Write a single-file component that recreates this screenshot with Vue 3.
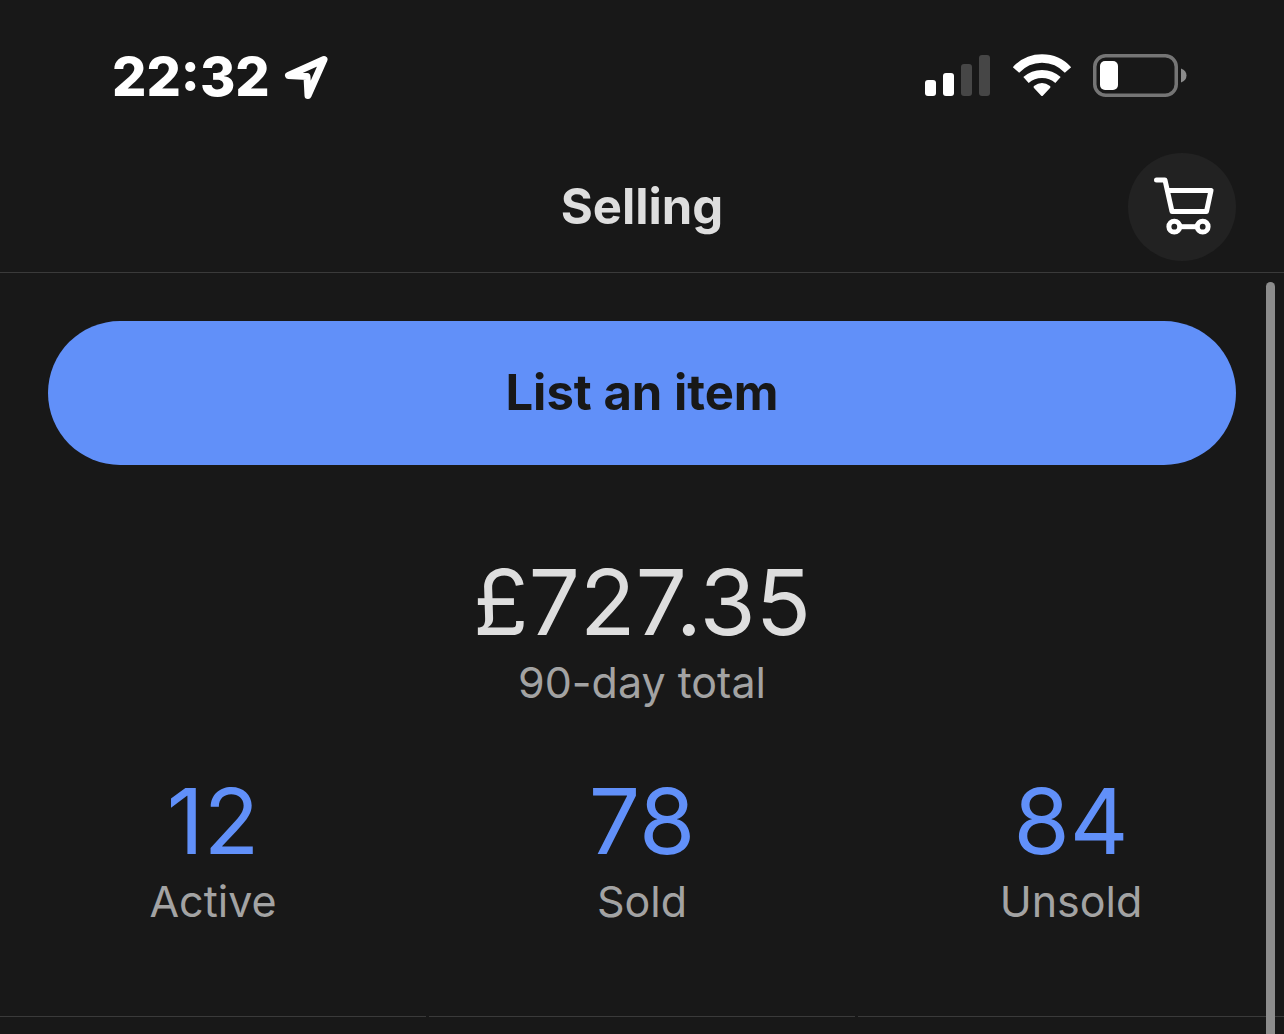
<script setup>
const bars = [
  { x: 0, height: 16, on: true },
  { x: 18, height: 23, on: true },
  { x: 36, height: 32, on: false },
  { x: 54, height: 41, on: false },
]

const stats = [
  { value: '12', label: 'Active' },
  { value: '78', label: 'Sold' },
  { value: '84', label: 'Unsold' },
]
</script>

<template>
  <div class="screen">
    <header class="top">
      <div class="status">
        <div class="clock">
          <time>22:32</time>
          <svg class="location" width="46" height="50" viewBox="0 0 46 50" aria-hidden="true">
            <path d="M42 7.5 6.5 23.5 25 24.500 26 43.500Z" fill="none" stroke="#fff" stroke-width="7" stroke-linejoin="round" />
          </svg>
        </div>
        <div class="indicators">
          <svg width="66" height="44" viewBox="0 0 66 44" aria-hidden="true">
            <rect
              v-for="bar in bars"
              :key="bar.x"
              :x="bar.x"
              :y="42 - bar.height"
              width="11"
              :height="bar.height"
              rx="3"
              :fill="bar.on ? '#fff' : '#464646'"
            />
          </svg>
          <svg width="60" height="44" viewBox="0 0 60 44" aria-hidden="true">
            <g fill="none" stroke="#fff">
              <path d="M4 16A35 35 0 0 1 56 16" stroke-width="8.5" />
              <path d="M14 26A24 24 0 0 1 46 26" stroke-width="8" />
            </g>
            <path d="M22 34Q21 33 22 32Q30 26 38 32Q39 33 38 34L31 41.5Q30 42.5 29 41.5Z" fill="#fff" />
          </svg>
          <svg width="94" height="44" viewBox="0 0 94 44" aria-hidden="true">
            <rect x="1.75" y="1.75" width="81.5" height="39.5" rx="11" fill="none" stroke="#757575" stroke-width="3.5" />
            <rect x="7" y="7" width="18" height="29" rx="5" fill="#fff" />
            <path d="M88 14.5Q93.5 16.5 93.5 21.5T88 28.5Z" fill="#8c8c8c" />
          </svg>
        </div>
      </div>
      <nav class="bar">
        <h1>Selling</h1>
        <button class="cart" type="button" aria-label="Basket">
          <svg width="60" height="60" viewBox="0 0 60 60" fill="none" stroke="#fff" stroke-width="5" aria-hidden="true">
            <path d="M4.500 3H13L20 34.500H54.500L59 13.500H16" stroke-linecap="round" stroke-linejoin="round" />
            <path d="M27 49.7H46" />
            <circle cx="22.3" cy="49.7" r="5.4" />
            <circle cx="50.7" cy="49.7" r="5.4" />
          </svg>
        </button>
      </nav>
    </header>

    <main>
      <div class="content">
        <button class="list" type="button">List an item</button>
        <section class="total">
          <p class="figure">£727.35</p>
          <p class="caption">90-day total</p>
        </section>
      </div>
      <section class="stats">
        <a v-for="stat in stats" :key="stat.label" href="#">
          <span class="figure">{{ stat.value }}</span>
          <span class="caption">{{ stat.label }}</span>
        </a>
      </section>
      <div class="tiles">
        <div v-for="stat in stats" :key="stat.label"></div>
      </div>
      <div class="scrollbar"></div>
    </main>
  </div>
</template>

<style>
body {
  background: #181818;
}
</style>

<style scoped>
* {
  box-sizing: border-box;
}

.screen {
  display: flex;
  flex-direction: column;
  min-height: 100vh;
  background: #181818;
  color: #dedede;
  font-family: Inter, "Liberation Sans", sans-serif;
}

.top {
  border-bottom: 1px solid #3a3a3a;
}

.status {
  display: flex;
  align-items: center;
  justify-content: space-between;
  height: 142px;
  padding: 10px 97px 0 112px;
}

.clock {
  display: flex;
  align-items: center;
  gap: 12px;
  padding-top: 2px;
  color: #fff;
  font-size: 54px;
  font-weight: 800;
  line-height: 64px;
}

.indicators {
  display: flex;
  align-items: center;
  gap: 21px;
}

.indicators svg,
.cart svg {
  overflow: visible;
}

.bar {
  display: grid;
  grid-template-columns: 1fr auto 1fr;
  align-items: center;
  padding: 11px 48px;
}

h1 {
  grid-column: 2;
  margin: 0;
  font-size: 49px;
  font-weight: 650;
  line-height: 56px;
}

.cart {
  display: flex;
  align-items: center;
  justify-content: center;
  justify-self: end;
  width: 108px;
  height: 108px;
  padding: 0;
  border: 0;
  border-radius: 50%;
  background: #222;
}

main {
  display: flex;
  flex: 1;
  flex-direction: column;
  position: relative;
}

.content {
  padding: 48px 48px 0;
}

.list {
  display: block;
  width: 100%;
  height: 144px;
  padding: 0 0 2px;
  border: 0;
  border-radius: 72px;
  background: #6190f9;
  color: #181818;
  font-family: inherit;
  font-size: 49px;
  font-weight: 650;
}

.total {
  margin-top: 89px;
  text-align: center;
}

.figure {
  margin: 0;
  font-size: 91px;
  line-height: 96px;
}

.caption {
  margin: 8px 0 0;
  color: #a3a3a3;
  font-size: 43px;
  line-height: 48px;
}

.stats,
.tiles {
  display: grid;
  grid-template-columns: repeat(3, 1fr);
  gap: 3px;
}

.stats {
  padding: 67px 0 91px;
}

.stats a {
  display: flex;
  flex-direction: column;
  align-items: center;
  color: #6190f9;
  text-decoration: none;
}

.tiles {
  flex: 1;
}

.tiles div {
  border-top: 1px solid #3a3a3a;
}

.scrollbar {
  position: absolute;
  top: 9px;
  right: 9px;
  bottom: 0;
  width: 9px;
  border-radius: 5px 5px 0 0;
  background: #8c8c8c;
}
</style>
